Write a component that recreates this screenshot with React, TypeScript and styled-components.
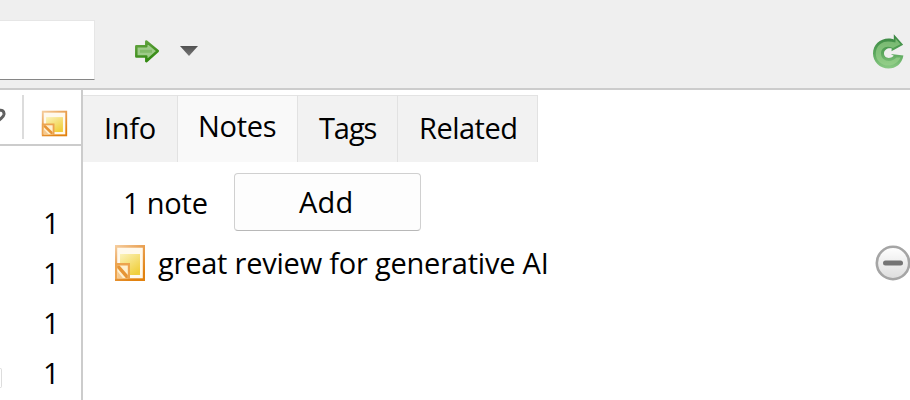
import React from "react";
import styled, { createGlobalStyle } from "styled-components";

const GlobalStyle = createGlobalStyle`
  * { box-sizing: border-box; }
  body { margin: 0; background: #fff; overflow: hidden; }
`;

const Window = styled.div`
  width: 910px;
  height: 400px;
  display: flex;
  flex-direction: column;
  overflow: hidden;
  background: #fff;
  color: #000;
  font-family: "Open Sans", "Noto Sans", sans-serif;
  font-size: 29px;
  line-height: 40px;
`;

const Toolbar = styled.header`
  height: 90px;
  flex: none;
  display: flex;
  align-items: flex-start;
  background: #efefef;
  border-bottom: 2px solid #ccc;
`;

const SearchField = styled.div`
  width: 95px;
  height: 60px;
  margin-top: 20px;
  background: #fff;
  border: 1px solid #e6e6e6;
  border-left: 0;
  border-bottom-color: #868686;
  border-bottom-right-radius: 1px;
`;

const ToolIcon = styled.svg<{ $left: number; $top: number }>`
  flex: none;
  display: block;
  margin-left: ${(p) => p.$left}px;
  margin-top: ${(p) => p.$top}px;
`;

const Spacer = styled.div`
  flex: 1;
`;

const Body = styled.div`
  flex: 1;
  min-height: 0;
  display: flex;
`;

const ItemList = styled.aside`
  width: 83px;
  flex: none;
  border-right: 2px solid #ccc;
  overflow: hidden;
`;

const ListHeader = styled.div`
  height: 56px;
  display: flex;
  border-bottom: 2px solid #ccc;
`;

const CutGlyph = styled.div`
  width: 22px;
  height: 48px;
  padding-top: 17px;
  svg { display: block; }
`;

const HeaderDivider = styled.div`
  width: 2px;
  height: 44px;
  margin-top: 5px;
  background: #dcdcdc;
`;

const HeaderIcon = styled.div`
  margin: 20px 0 0 17px;
  svg { display: block; }
`;

const CountRows = styled.div`
  padding-top: 57px;
`;

const CountRow = styled.div`
  height: 50px;
  display: flex;
  justify-content: space-between;
  padding-right: 21px;
`;

const CellEdge = styled.div<{ $shown: boolean }>`
  width: 2px;
  height: 20px;
  margin-top: 15px;
  border: ${(p) => (p.$shown ? "1px solid #ddd" : "0")};
  border-left: 0;
  border-radius: 0 2px 2px 0;
`;

const Count = styled.span`
  width: 17px;
`;

const Detail = styled.main`
  flex: 1;
  min-width: 0;
  padding-top: 5px;
`;

const Tabs = styled.div`
  display: flex;
  height: 67px;
`;

const Tab = styled.div<{ $width: number; $active?: boolean }>`
  width: ${(p) => p.$width}px;
  padding: ${(p) => (p.$active ? "10px 0 0 20px" : "12px 0 0 21px")};
  background: ${(p) => (p.$active ? "#f9f9f9" : "#f2f2f2")};
  border-top: 1px solid #e3e3e3;
  border-right: 1px solid #e2e2e2;
  white-space: nowrap;
`;

const Label = styled.span<{ $tracking?: number }>`
  letter-spacing: ${(p) => p.$tracking ?? 0}px;
  white-space: nowrap;
`;

const NotesHeader = styled.div`
  display: flex;
  align-items: flex-start;
  height: 58px;
  margin-top: 11px;
`;

const NoteCount = styled.div`
  width: 151px;
  padding: 10px 0 0 40px;
`;

const AddButton = styled.button`
  width: 187px;
  height: 58px;
  padding: 8px 0 0 64px;
  display: flex;
  align-items: flex-start;
  text-align: left;
  font: inherit;
  line-height: 40px;
  color: inherit;
  background: #fdfdfd;
  border: 1px solid #d0d0d0;
  border-bottom-color: #b8b8b8;
  border-radius: 4px;
`;

const NoteRow = styled.div`
  display: flex;
  align-items: flex-start;
  padding: 12px 0 0 31px;
  svg { display: block; flex: none; }
`;

const NoteMarker = styled.div`
  margin-top: 1px;
`;

const NoteTitle = styled.div`
  margin-left: 12px;
`;

const RemoveIcon = styled.svg`
  margin: 2px -1px 0 auto;
`;

function NoteIcon({ width, height, id }: { width: number; height: number; id: string }) {
  return (
    <svg width={width} height={height} viewBox="0 0 32 38" preserveAspectRatio="none">
      <defs>
        <linearGradient id={`${id}-frame`} x1="0" y1="0" x2="0.6" y2="1">
          <stop offset="0" stopColor="#f6cfa2" />
          <stop offset="0.45" stopColor="#e9a052" />
          <stop offset="1" stopColor="#e2820f" />
        </linearGradient>
        <linearGradient id={`${id}-page`} x1="0" y1="0" x2="0.7" y2="1">
          <stop offset="0" stopColor="#fbf2bb" />
          <stop offset="1" stopColor="#f0cf3c" />
        </linearGradient>
      </defs>
      <rect x="1" y="1" width="30" height="36" fill={`url(#${id}-frame)`} />
      <rect x="3.2" y="3.7" width="25.6" height="30.6" fill="#fff9ec" />
      <rect x="6" y="10" width="20" height="21" fill={`url(#${id}-page)`} />
      <path d="M1 19H16V35H1Z" fill="#eda44f" />
      <path d="M3.2 21.5H13.8V34.3H3.2Z" fill="#fff0ce" />
      <path d="M3.2 21.5H5.5L13.8 31V34.3H12L3.2 24Z" fill="#e69436" />
      <path d="M3.2 27L9 34.3H3.2Z" fill="#f5c98f" />
    </svg>
  );
}

const tabs = [
  { name: "Info", width: 95, tracking: -0.3 },
  { name: "Notes", width: 120, tracking: -0.3, active: true },
  { name: "Tags", width: 100, tracking: -1.1 },
  { name: "Related", width: 140, tracking: -0.5 },
];

export default function App() {
  return (
    <>
      <GlobalStyle />
      <Window>
        <Toolbar>
          <SearchField />
          <ToolIcon $left={39} $top={39} width="27" height="25" viewBox="0 0 27 25">
            <defs>
              <linearGradient id="arrow-edge" x1="0" y1="0" x2="0.4" y2="1">
                <stop offset="0" stopColor="#67a544" />
                <stop offset="1" stopColor="#338a12" />
              </linearGradient>
            </defs>
            <path d="M2.3 7.3H12.3V2.5L23.8 12L12.3 22.2V17.5H2.3Z" fill="#9ecb89" stroke="url(#arrow-edge)" strokeWidth="2.5" strokeLinejoin="round" />
            <path d="M6 12.3H18" stroke="#83bb6a" strokeWidth="3" />
          </ToolIcon>
          <ToolIcon $left={19} $top={45} width="19" height="12" viewBox="0 0 19 12">
            <defs>
              <linearGradient id="caret" x1="0" y1="0" x2="0" y2="1">
                <stop offset="0" stopColor="#505050" />
                <stop offset="1" stopColor="#777" />
              </linearGradient>
            </defs>
            <path d="M0 1H18L9 11Z" fill="url(#caret)" />
          </ToolIcon>
          <Spacer />
          <ToolIcon $left={0} $top={33} width="38" height="38" viewBox="0 0 38 38">
            <defs>
              <linearGradient id="sync" x1="0" y1="0" x2="0" y2="1">
                <stop offset="0" stopColor="#36833f" />
                <stop offset="0.55" stopColor="#5aa75c" />
                <stop offset="1" stopColor="#8bca85" />
              </linearGradient>
            </defs>
            <path
              d="M21.8 1.2L31.2 11.8L19.5 18.2L19.7 15.6C16 14.6 12 16.8 12 20.5C12 24.5 17.3 27 21.8 22.7L18.8 21L31.4 22.6C30 31 24 35.6 16.5 35.6C7.5 35.6 1 28.8 1 20.6C1 12 7.8 5.6 16.5 5.6C18.7 5.6 20.4 5.9 21.8 6.5Z"
              fill="url(#sync)"
            />
            <path d="M23.6 5.5L28.4 11.3L21 15C13.8 11.8 9 15.5 9 20.5C9 28.4 19.3 30.4 24.4 24.6H28.6C24 33.7 13.5 34.6 7.8 29.5C2.2 24.4 2.6 15.6 8 11.2C13 7.2 18 8.3 23.4 9.5Z" fill="#9ed58f" opacity="0.6" />
          </ToolIcon>
        </Toolbar>
        <Body>
          <ItemList>
            <ListHeader>
              <CutGlyph>
                <svg width="8" height="20" viewBox="0 0 8 20">
                  <path d="M-2 4.2C1.5 1.8 4.3 4 4 7.2C3.6 10 1 11-1 13.4" fill="none" stroke="#606060" strokeWidth="3" />
                </svg>
              </CutGlyph>
              <HeaderDivider />
              <HeaderIcon>
                <NoteIcon width={27} height={27} id="column" />
              </HeaderIcon>
            </ListHeader>
            <CountRows>
              {[1, 1, 1, 1].map((n, i) => (
                <CountRow key={i}>
                  <CellEdge $shown={i === 3} />
                  <Count>{n}</Count>
                </CountRow>
              ))}
            </CountRows>
          </ItemList>
          <Detail>
            <Tabs>
              {tabs.map((t) => (
                <Tab key={t.name} $width={t.width} $active={t.active}>
                  <Label $tracking={t.tracking}>{t.name}</Label>
                </Tab>
              ))}
            </Tabs>
            <NotesHeader>
              <NoteCount>
                <Label $tracking={-0.2}>1 note</Label>
              </NoteCount>
              <AddButton>
                <Label $tracking={0.2}>Add</Label>
              </AddButton>
            </NotesHeader>
            <NoteRow>
              <NoteMarker>
                <NoteIcon width={32} height={38} id="note" />
              </NoteMarker>
              <NoteTitle>
                <Label $tracking={-0.22}>great review for generative AI</Label>
              </NoteTitle>
              <RemoveIcon width="36" height="36" viewBox="0 0 36 36">
                <defs>
                  <linearGradient id="remove" x1="0" y1="0" x2="0" y2="1">
                    <stop offset="0" stopColor="#fff" />
                    <stop offset="1" stopColor="#ddd" />
                  </linearGradient>
                </defs>
                <circle cx="18" cy="18" r="16.2" fill="url(#remove)" stroke="#a5a5a5" strokeWidth="2.6" />
                <rect x="8" y="15.5" width="20" height="5" rx="2.5" fill="#747474" />
              </RemoveIcon>
            </NoteRow>
          </Detail>
        </Body>
      </Window>
    </>
  );
}
